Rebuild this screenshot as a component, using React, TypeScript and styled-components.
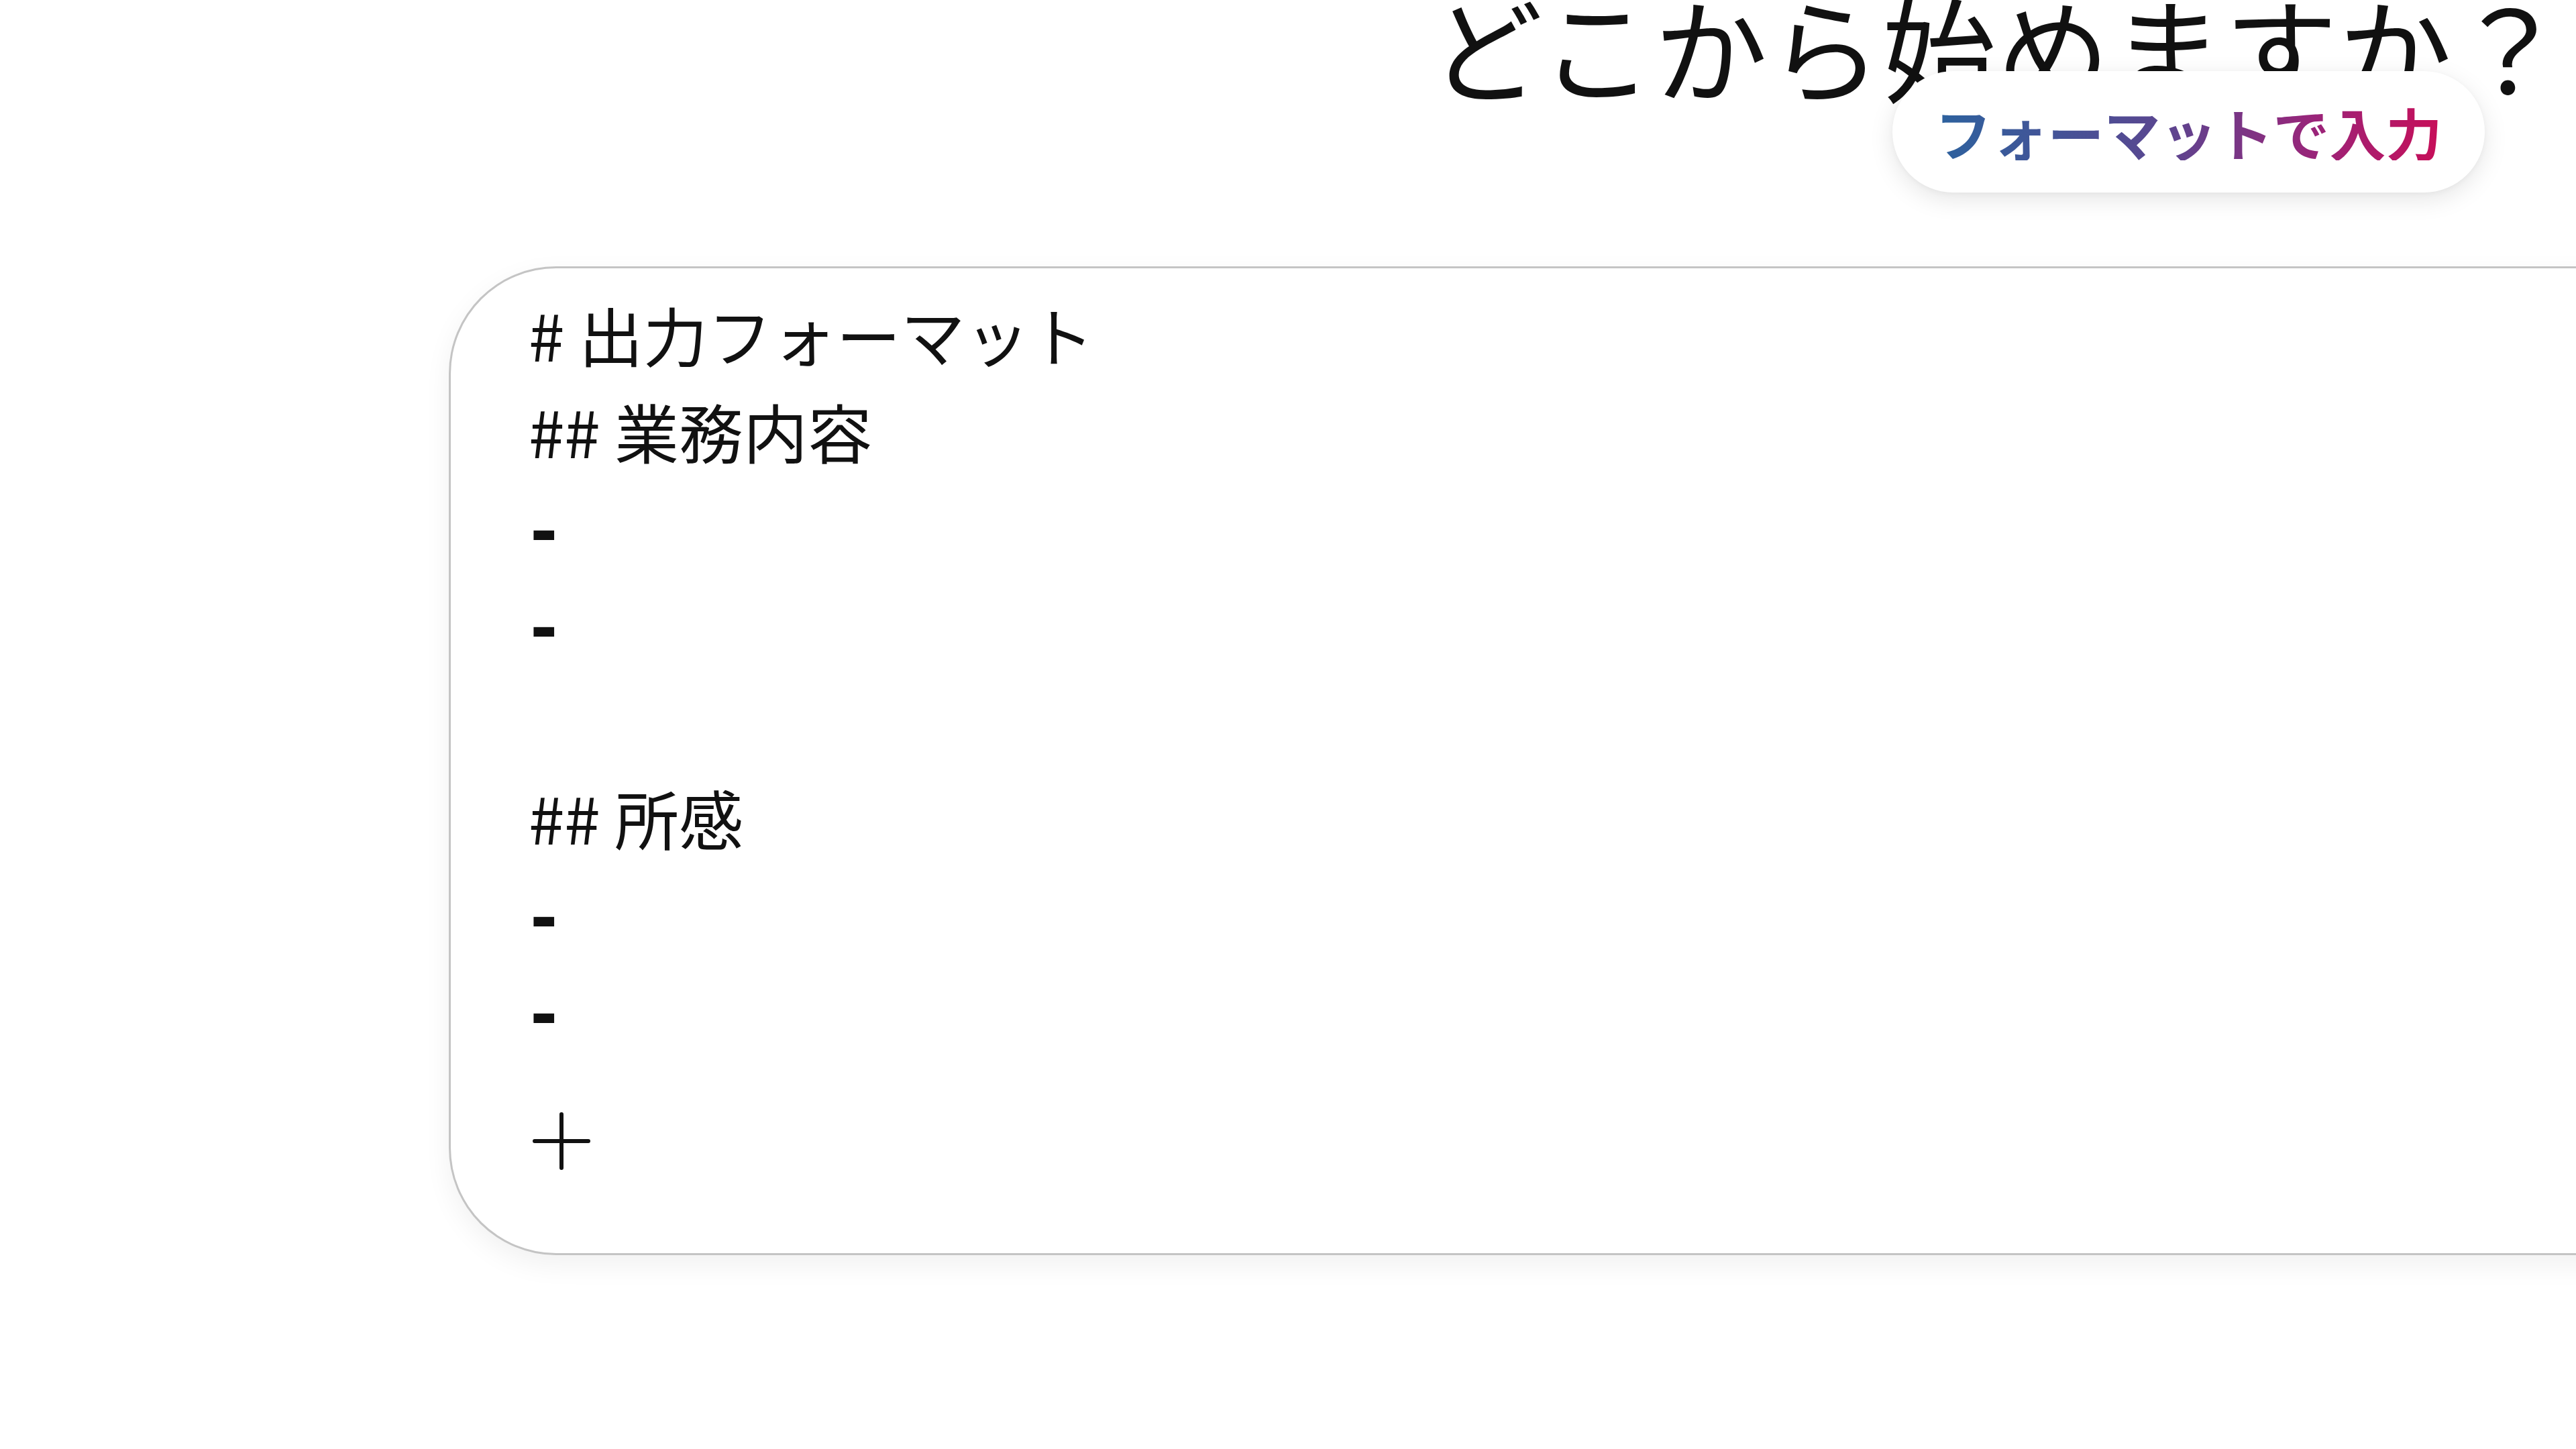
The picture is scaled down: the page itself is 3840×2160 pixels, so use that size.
import styled, { createGlobalStyle } from "styled-components";

const GlobalStyle = createGlobalStyle`
  html, body {
    margin: 0;
    padding: 0;
    background: #ffffff;
  }
  body {
    font-family: "Noto Sans CJK JP", "Noto Sans", sans-serif;
    color: #111111;
  }
`;

const Page = styled.div`
  position: relative;
  width: 3840px;
  height: 2160px;
  overflow: hidden;
  background: #ffffff;
`;

const Header = styled.header`
  position: relative;
  display: flex;
  align-items: flex-start;
  height: 397px;
  padding-left: 2131px;
  box-sizing: border-box;
`;

const Title = styled.h1`
  margin: -17px 0 0 0;
  font-size: 169px;
  font-weight: 400;
  line-height: 1;
  letter-spacing: 1px;
  white-space: nowrap;
  color: #111111;
`;

const FormatButton = styled.button`
  position: absolute;
  left: 2821px;
  top: 106px;
  width: 883px;
  height: 181px;
  border: none;
  border-radius: 91px;
  background: #ffffff;
  box-shadow: 0 10px 36px rgba(0, 0, 0, 0.1), 0 2px 8px rgba(0, 0, 0, 0.04);
  display: flex;
  align-items: center;
  justify-content: center;
  cursor: pointer;
  font-family: "Noto Sans CJK JP", sans-serif;
`;

const GradientLabel = styled.span`
  font-size: 84px;
  font-weight: 700;
  line-height: 1;
  white-space: nowrap;
  background: linear-gradient(90deg, #2c629e 0%, #5a4690 45%, #9a2479 75%, #c80e58 100%);
  -webkit-background-clip: text;
  background-clip: text;
  color: transparent;
`;

const Card = styled.section`
  margin-left: 669px;
  width: 3500px;
  height: 1474px;
  box-sizing: border-box;
  border: 3px solid #c4c4c4;
  border-right: none;
  border-radius: 160px 0 0 160px;
  background: #ffffff;
  box-shadow: 0 14px 40px rgba(0, 0, 0, 0.06);
  padding: 26px 0 0 116px;
  display: flex;
  flex-direction: column;
`;

const Line = styled.div`
  font-size: 96px;
  line-height: 144px;
  height: 144px;
  white-space: pre;
  color: #111111;
`;

const Dash = styled.span`
  font-family: "DejaVu Sans", sans-serif;
  font-size: 100px;
  font-weight: 700;
  padding-left: 2px;
`;

const AddButton = styled.button`
  margin: 77px 0 0 6px;
  width: 92px;
  height: 92px;
  padding: 0;
  border: none;
  background: transparent;
  display: flex;
  align-items: center;
  justify-content: flex-start;
  cursor: pointer;
`;

const lines = [
  "# 出力フォーマット",
  "## 業務内容",
  "-",
  "-",
  "",
  "## 所感",
  "-",
  "-",
];

export default function App() {
  return (
    <Page>
      <GlobalStyle />
      <Header>
        <Title>どこから始めますか？</Title>
        <FormatButton>
          <GradientLabel>フォーマットで入力</GradientLabel>
        </FormatButton>
      </Header>
      <Card>
        {lines.map((text, i) => (
          <Line key={i}>{text === "-" ? <Dash>-</Dash> : text}</Line>
        ))}
        <AddButton aria-label="追加">
          <svg width="86" height="86" viewBox="0 0 86 86">
            <path
              d="M43 3 V83 M3 43 H83"
              stroke="#111111"
              strokeWidth="6"
              strokeLinecap="round"
              fill="none"
            />
          </svg>
        </AddButton>
      </Card>
    </Page>
  );
}
